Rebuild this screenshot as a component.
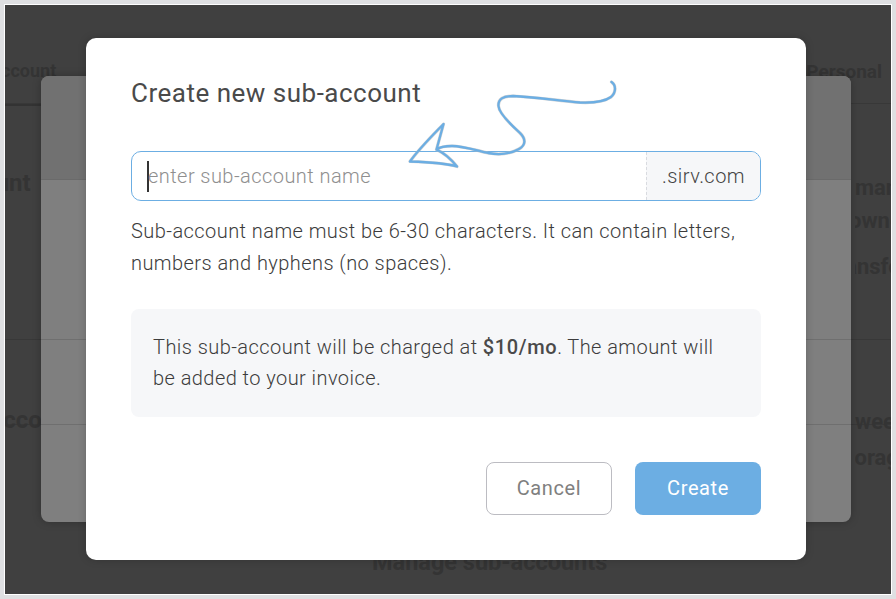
<div class="frame">
  <div class="page">
    <header class="tabs">
      <span class="tab active">Account</span>
      <span class="tab">Personal</span>
    </header>
    <section class="sect one">
      <h2 class="lead">Account</h2>
      <div class="side">
        <p>many</p>
        <p>owners</p>
        <p>transfer</p>
      </div>
    </section>
    <section class="sect two">
      <h2 class="lead">Accounts</h2>
      <div class="side">
        <p>weekly</p>
        <p>storage</p>
      </div>
    </section>
    <p class="manage">Manage sub-accounts</p>
  </div>

  <div class="layer centered">
    <div class="under">
      <div class="u-head"></div>
      <div class="u-row a"></div>
      <div class="u-row b"></div>
    </div>
  </div>

  <div class="layer centered">
    <div class="dialog">
      <h1>Create new sub-account</h1>
      <div class="field">
        <div class="input"><span class="caret"></span><span class="ph">enter sub-account name</span></div>
        <div class="addon">.sirv.com</div>
      </div>
      <p class="hint">Sub-account name must be 6-30 characters. It can contain letters, numbers and hyphens (no spaces).</p>
      <div class="info">This sub-account will be charged at <b>$10/mo</b>. The amount will be added to your invoice.</div>
      <div class="actions">
        <button class="btn ghost">Cancel</button>
        <button class="btn primary">Create</button>
      </div>
    </div>
  </div>

  <svg class="scribble" width="896" height="599" viewBox="0 0 896 599" fill="none" stroke-linecap="round" stroke-linejoin="round">
    <path class="s-shadow" d="M611.500 82C616 85 616.500 92 611 97C604 102 592 103 580 102.500C560 101 535 97 513 96C503 96 498 99 498.500 106C499 113 510 124 520 133C526 139 526 145 519 149C510 154 498 155 488 153C475 150 463 146 452 146C445 146 440 147 436.500 149.500L443.500 124C430 138 418 150 410 161.500C425 162 445 163 457 166.500C451 159 444 153 436.500 149.500"/>
    <path class="s-line" d="M611.500 82C616 85 616.500 92 611 97C604 102 592 103 580 102.500C560 101 535 97 513 96C503 96 498 99 498.500 106C499 113 510 124 520 133C526 139 526 145 519 149C510 154 498 155 488 153C475 150 463 146 452 146C445 146 440 147 436.500 149.500L443.500 124C430 138 418 150 410 161.500C425 162 445 163 457 166.500C451 159 444 153 436.500 149.500"/>
  </svg>
</div>

<style>
  :global(body) {
    margin: 0;
    background: #dfe0e2;
    font-family: Roboto, "Liberation Sans", sans-serif;
  }
  .frame {
    position: relative;
    box-sizing: border-box;
    width: 888px;
    height: 591px;
    margin: 4px 0 0 4px;
    border: 1px solid #fff;
    overflow: hidden;
    background: #404040;
  }
  .page {
    height: 100%;
    color: #343434;
    font-weight: 700;
  }
  .tabs {
    box-sizing: border-box;
    height: 99px;
    display: flex;
    justify-content: space-between;
    padding: 55px 9px 0 0;
    border-bottom: 1px solid #383838;
    font-size: 19px;
  }
  .tab.active {
    margin-left: -16px;
    height: 44px;
    padding-right: 20px;
    font-size: 18px;
    box-shadow: 0 2px 0 #333;
  }
  .sect {
    display: flex;
    justify-content: space-between;
    border-bottom: 1px solid #383838;
  }
  .sect.one { height: 235px; }
  .sect.two { height: 84px; }
  .lead {
    margin: 0;
    font-size: 24px;
    font-weight: 700;
    white-space: nowrap;
  }
  .sect.one .lead { margin: 65px 0 0 -64px; }
  .sect.two .lead { margin: 66px 0 0 -18px; }
  .side {
    box-sizing: border-box;
    width: 36px;
    font-size: 22px;
    white-space: nowrap;
    overflow: hidden;
  }
  .side p { margin: 0; }
  .sect.one .side { height: 235px; padding-top: 67px; line-height: 33px; }
  .sect.one .side p:last-child { margin-top: 13px; text-indent: -25px; }
  .sect.one .side p:nth-child(2) { text-indent: -6px; }
  .sect.two .side { height: 140px; padding-top: 64px; line-height: 36px; }
  .sect.two .side p:last-child { text-indent: -19px; }
  .manage {
    margin: 123px 0 0 367px;
    font-size: 23.5px;
    white-space: nowrap;
  }
  .layer {
    position: absolute;
    inset: 0;
  }
  .centered {
    display: grid;
    place-items: center;
    padding: 0 4px 1px 0;
  }
  .under {
    width: 810px;
    height: 446px;
    border-radius: 8px;
    overflow: hidden;
    background: #7f7f7f;
    box-shadow: 0 0 8px rgba(0, 0, 0, 0.25);
  }
  .u-head {
    height: 103px;
    background: #717171;
    border-bottom: 1px solid #6a6a6a;
  }
  .u-row {
    border-bottom: 1px solid #6f6f6f;
  }
  .u-row.a { height: 159px; }
  .u-row.b { height: 84px; }
  .dialog {
    box-sizing: border-box;
    width: 720px;
    height: 522px;
    padding: 38px 45px 45px;
    border-radius: 10px;
    background: #fff;
    color: #3c3c3c;
    box-shadow: 0 0 8px rgba(0, 0, 0, 0.2);
    display: flex;
    flex-direction: column;
    letter-spacing: 0.44px;
  }
  h1 {
    margin: 0;
    height: 35px;
    font-size: 26px;
    line-height: 35px;
    font-weight: 400;
    letter-spacing: 0.5px;
    color: #4a4a4a;
  }
  .field {
    box-sizing: border-box;
    height: 50px;
    margin-top: 40px;
    display: flex;
    border: 1px solid #6caee3;
    border-radius: 10px;
    overflow: hidden;
    font-size: 20px;
    font-weight: 300;
  }
  .input {
    flex: 1;
    display: flex;
    align-items: center;
    padding-left: 15px;
  }
  .caret {
    width: 2px;
    height: 31px;
    background: #333;
    margin-right: -1px;
  }
  .ph { color: #8f8f8f; }
  .addon {
    box-sizing: border-box;
    width: 114px;
    display: flex;
    align-items: center;
    justify-content: center;
    background: #f6f7f9;
    border-left: 1px dashed #d9dbe0;
    color: #444;
  }
  .hint {
    margin: 14px 0 0;
    font-size: 20px;
    line-height: 32px;
    font-weight: 300;
  }
  .info {
    box-sizing: border-box;
    height: 108px;
    margin-top: 30px;
    padding: 23px 22px 22px;
    border-radius: 8px;
    background: #f6f7f9;
    font-size: 20px;
    line-height: 31px;
    font-weight: 300;
  }
  .info b { font-weight: 500; color: #4a4a4a; letter-spacing: 0.6px; }
  .actions {
    margin-top: auto;
    display: flex;
    justify-content: flex-end;
    gap: 23px;
  }
  .btn {
    box-sizing: border-box;
    width: 126px;
    height: 53px;
    padding: 0 0 2px;
    border-radius: 8px;
    font: 400 20px Roboto, sans-serif;
    letter-spacing: 0.6px;
  }
  .ghost {
    background: #fff;
    border: 1px solid #bcbcc2;
    color: #808080;
  }
  .primary {
    background: #6caee3;
    border: 0;
    color: #fff;
  }
  .scribble {
    position: absolute;
    left: -5px;
    top: -5px;
    pointer-events: none;
  }
  .s-shadow { stroke: #b9b9b9; stroke-width: 3.2; opacity: .6; }
  .s-line { stroke: #6caee3; stroke-width: 2.3; }
</style>
